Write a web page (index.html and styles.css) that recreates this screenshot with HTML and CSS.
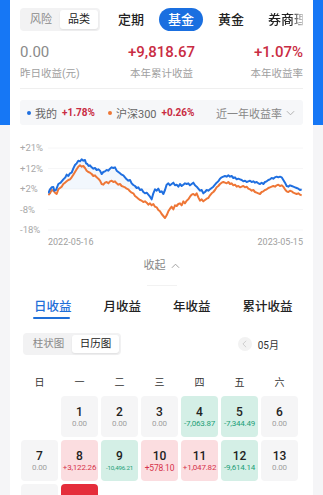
FILE: index.html
```html
<!DOCTYPE html>
<html lang="zh">
<head>
<meta charset="utf-8">
<link rel="stylesheet" href="styles.css">
</head>
<body>
<div class="page">
  <div class="card">
    <div class="toprow">
      <div class="seg"><span class="seg-item">风险</span><span class="seg-item on">品类</span></div>
      <div class="tabs">
        <span class="tab">定期</span>
        <span class="tab active">基金</span>
        <span class="tab">黄金</span>
        <span class="tab fade">券商理财</span>
      </div>
    </div>

    <div class="stats">
      <div class="stat left"><div class="num zero">0.00</div><div class="lbl">昨日收益(元)</div></div>
      <div class="stat center"><div class="num red">+9,818.67</div><div class="lbl">本年累计收益</div></div>
      <div class="stat right"><div class="num red">+1.07%</div><div class="lbl">本年收益率</div></div>
    </div>
    <div class="divider"></div>

    <div class="legend">
      <span class="dot blue"></span><span class="lg-name">我的</span><span class="lg-val">+1.78%</span>
      <span class="dot orange"></span><span class="lg-name">沪深300</span><span class="lg-val">+0.26%</span>
      <span class="lg-range">近一年收益率
        <svg class="chev" viewBox="0 0 10 6" width="9" height="6"><path d="M1 1 L5 5 L9 1" fill="none" stroke="#aaa" stroke-width="1"/></svg>
      </span>
    </div>

    <div class="chart">
      <div class="ylabels">
        <span>+21%</span><span>+12%</span><span>+2%</span><span>-8%</span><span>-18%</span>
      </div>
      <svg class="plot" viewBox="144 6 765 282" preserveAspectRatio="none" width="255" height="94">
        <g stroke="#f1f1f3" stroke-width="2">
          <line x1="144" x2="909" y1="24" y2="24"/>
          <line x1="144" x2="909" y1="85.5" y2="85.5"/>
          <line x1="144" x2="909" y1="147" y2="147"/>
          <line x1="144" x2="909" y1="208.5" y2="208.5"/>
          <line x1="144" x2="909" y1="270" y2="270"/>
        </g>
        <polygon fill="#2072e0" fill-opacity="0.06" points="145,147 145,160 150,148 155,142 160,141 163,152 168,150 175,132 182,128 190,118 196,112 200,104 205,108 210,100 215,98 220,85 225,75 230,70 235,62 240,64 245,58 250,62 255,60 258,70 262,72 266,78 270,76 275,82 280,86 285,84 290,90 295,88 300,92 305,102 310,96 315,94 320,90 325,92 330,86 335,82 340,84 345,82 350,92 355,96 360,100 365,104 370,106 375,112 380,118 385,122 390,120 395,130 400,135 405,138 410,144 415,142 420,147"/>
        <polyline fill="none" stroke="#ee7636" stroke-width="6" stroke-linejoin="round" points="145,165 150,160 155,150 160,152 165,158 170,162 175,148 180,144 185,140 190,132 195,128 200,124 205,120 210,118 215,112 220,104 225,96 230,88 235,80 240,76 245,80 250,78 255,84 260,92 265,96 270,98 275,102 280,108 285,106 290,112 295,116 300,122 305,132 310,134 315,128 320,126 325,130 330,124 335,122 340,126 345,124 350,130 355,134 360,132 365,138 370,140 375,142 380,146 385,148 390,154 395,158 400,160 405,168 410,172 415,176 420,180 425,182 430,186 435,184 440,188 445,194 450,190 455,196 460,192 465,200 470,202 475,210 480,214 485,222 490,228 495,234 500,226 505,214 510,206 515,200 520,208 525,196 530,198 535,192 540,190 545,196 550,184 555,190 560,182 565,178 570,170 575,164 580,162 585,166 590,160 595,172 600,182 605,178 610,184 615,180 620,176 625,174 630,166 635,160 640,156 645,150 650,142 655,138 660,132 665,128 670,126 675,128 680,130 685,126 690,132 695,130 700,136 705,134 710,140 715,138 720,142 725,140 730,138 735,142 740,140 745,146 750,148 755,152 760,150 765,156 770,158 775,160 780,162 785,156 790,154 795,150 800,148 805,144 810,142 815,140 820,138 825,140 830,136 835,134 840,138 845,136 850,140 855,148 860,154 865,156 870,152 875,154 880,158 885,160 890,162 895,160 900,164 905,166"/>
        <polyline fill="none" stroke="#1f6fe0" stroke-width="6" stroke-linejoin="round" points="145,160 150,148 155,142 160,141 163,152 168,150 175,132 182,128 190,118 196,112 200,104 205,108 210,100 215,98 220,85 225,75 230,70 235,62 240,64 245,58 250,62 255,60 258,70 262,72 266,78 270,76 275,82 280,86 285,84 290,90 295,88 300,92 305,102 310,96 315,94 320,90 325,92 330,86 335,82 340,84 345,82 350,92 355,96 360,100 365,104 370,106 375,112 380,118 385,122 390,120 395,130 400,135 405,138 410,144 415,142 420,150 425,148 430,156 435,160 440,158 445,164 450,170 455,178 460,160 465,148 470,152 475,146 480,156 485,154 490,162 495,150 500,134 505,130 510,136 515,132 520,128 525,136 530,134 535,140 540,132 545,138 550,134 555,130 560,132 565,130 570,136 575,132 580,128 585,136 590,140 595,146 600,152 605,150 610,160 615,156 620,150 625,152 630,148 635,144 640,140 645,134 650,128 655,124 660,116 665,112 670,110 675,108 680,110 685,106 690,110 695,108 700,114 705,112 710,118 715,116 720,118 725,120 730,124 735,122 740,126 745,124 750,122 755,126 760,124 765,128 770,126 775,130 780,132 785,128 790,132 795,126 800,124 805,120 810,118 815,114 820,116 825,112 830,110 835,112 840,110 845,112 850,120 855,128 860,138 865,140 870,136 875,138 880,140 885,142 890,144 895,146 900,150 905,148"/>
      </svg>
    </div>
    <div class="dates"><span>2022-05-16</span><span>2023-05-15</span></div>

    <div class="collapse">收起
      <svg viewBox="0 0 10 6" width="9" height="6"><path d="M1 5 L5 1 L9 5" fill="none" stroke="#999" stroke-width="1"/></svg>
    </div>
    <div class="handle"></div>

    <div class="ptabs">
      <span class="ptab active">日收益</span>
      <span class="ptab">月收益</span>
      <span class="ptab">年收益</span>
      <span class="ptab">累计收益</span>
    </div>

    <div class="viewrow">
      <div class="seg seg2"><span class="seg-item">柱状图</span><span class="seg-item on">日历图</span></div>
      <div class="month">
        <span class="prev"><svg viewBox="0 0 6 10" width="5" height="8"><path d="M5 1 L1 5 L5 9" fill="none" stroke="#c4c4c4" stroke-width="1"/></svg></span>
        <span class="mtext">05月</span>
      </div>
    </div>

    <div class="weekdays">
      <span>日</span><span>一</span><span>二</span><span>三</span><span>四</span><span>五</span><span>六</span>
    </div>

    <div class="cal">
      <div class="cell empty"></div>
      <div class="cell"><b>1</b><i>0.00</i></div>
      <div class="cell"><b>2</b><i>0.00</i></div>
      <div class="cell"><b>3</b><i>0.00</i></div>
      <div class="cell down"><b>4</b><i>-7,063.87</i></div>
      <div class="cell down"><b>5</b><i>-7,344.49</i></div>
      <div class="cell"><b>6</b><i>0.00</i></div>

      <div class="cell"><b>7</b><i>0.00</i></div>
      <div class="cell up"><b>8</b><i>+3,122.26</i></div>
      <div class="cell down"><b>9</b><i class="tiny">-10,496.21</i></div>
      <div class="cell up"><b>10</b><i class="big">+578.10</i></div>
      <div class="cell up"><b>11</b><i>+1,047.82</i></div>
      <div class="cell down"><b>12</b><i>-9,614.14</i></div>
      <div class="cell"><b>13</b><i>0.00</i></div>

      <div class="cell"></div>
      <div class="cell today"></div>
    </div>
  </div>
</div>
</body>
</html>
```

FILE: styles.css
```css
html, body {
  margin: 0;
  padding: 0;
}
body {
  background: linear-gradient(to bottom, #1677f5 0, #1677f5 125px, #f5f5f7 125px);
  font-family: Roboto, "Noto Sans CJK SC", sans-serif;
  color: #222;
  overflow: hidden;
}
.page {
  padding: 0 10px;
}
.card {
  background: #fff;
  padding: 8px 10px 0;
  min-height: 487px;
}

/* top row */
.toprow {
  display: flex;
  align-items: center;
  height: 23px;
  overflow: hidden;
}
.seg {
  display: flex;
  flex: none;
  background: #f2f2f3;
  border-radius: 4px;
  padding: 2px;
}
.seg-item {
  width: 38px;
  height: 19px;
  line-height: 19px;
  text-align: center;
  font-size: 11px;
  color: #8a8a8a;
  border-radius: 3px;
}
.seg-item.on {
  background: #fff;
  color: #222;
  box-shadow: 0 1px 2px rgba(0, 0, 0, 0.08);
}
.tabs {
  display: flex;
  flex: none;
  gap: 6px;
  margin-left: 9px;
}
.tab {
  padding: 0 9px;
  height: 23px;
  line-height: 23px;
  font-size: 13px;
  font-weight: 500;
  color: #222;
  border-radius: 12px;
  white-space: nowrap;
}
.tab.active {
  background: #1a6fe0;
  color: #fff;
}
.tab.fade {
  -webkit-mask-image: linear-gradient(to right, #000 45%, rgba(0, 0, 0, 0.25) 62%);
  mask-image: linear-gradient(to right, #000 45%, rgba(0, 0, 0, 0.25) 62%);
}

/* stats */
.stats {
  display: grid;
  grid-template-columns: 1fr 1fr 1fr;
  margin-top: 11px;
}
.stat.center { text-align: center; }
.stat.right { text-align: right; }
.num {
  font-size: 15px;
  line-height: 20px;
  font-weight: 500;
}
.num.zero {
  color: #8a8a8a;
  font-weight: 400;
}
.red { color: #c92c43; }
.lbl {
  margin-top: 4px;
  font-size: 10.5px;
  line-height: 16px;
  color: #a0a0a0;
}
.divider {
  margin-top: 6px;
  height: 1px;
  background: #efefef;
}

/* legend */
.legend {
  margin-top: 11px;
  height: 25px;
  background: #f6f7f9;
  border-radius: 3px;
  display: flex;
  align-items: center;
  padding: 0 8px 0 7px;
  font-size: 11px;
}
.dot {
  width: 4px;
  height: 4px;
  border-radius: 50%;
  margin-right: 4px;
}
.dot.blue { background: #1f6fe0; }
.dot.orange { background: #ee7636; margin-left: 13px; }
.lg-name {
  color: #666;
  margin-right: 5px;
}
.lg-val {
  color: #c92c43;
  font-weight: 700;
  font-size: 10px;
}
.lg-range {
  margin-left: auto;
  color: #888;
  display: flex;
  align-items: center;
  gap: 4px;
}
.chev { display: block; }

/* chart */
.chart {
  margin-top: 17px;
  display: flex;
}
.ylabels {
  width: 28px;
  display: flex;
  flex-direction: column;
  gap: 8.5px;
  font-size: 9.5px;
  line-height: 12px;
  color: #a8a8a8;
}
.plot {
  display: block;
  width: 255px;
  height: 94px;
}
.dates {
  display: flex;
  justify-content: space-between;
  padding-left: 28px;
  font-size: 9px;
  line-height: 12px;
  color: #a0a0a0;
}
.collapse {
  margin-top: 10px;
  height: 16px;
  line-height: 16px;
  font-size: 11px;
  color: #888;
  display: flex;
  justify-content: center;
  align-items: center;
  gap: 5px;
}
.handle {
  margin: 11px auto 0;
  width: 30px;
  height: 1px;
  background: #f2f2f2;
}

/* profit tabs */
.ptabs {
  margin-top: 11px;
  display: flex;
  gap: 32px;
  padding-left: 14px;
}
.ptab {
  position: relative;
  font-size: 12.5px;
  font-weight: 500;
  line-height: 20px;
  height: 22px;
  color: #222;
}
.ptab.active {
  color: #1f6fd8;
}
.ptab.active::after {
  content: "";
  position: absolute;
  left: -1px;
  bottom: 0;
  width: 37px;
  height: 2px;
  border-radius: 1px;
  background: #1f6fd8;
}

.viewrow {
  margin-top: 14px;
  display: flex;
  align-items: center;
  justify-content: space-between;
  padding-left: 3px;
}
.seg2 .seg-item {
  width: 47px;
  height: 18px;
  line-height: 18px;
  font-size: 10.5px;
}
.month {
  display: flex;
  align-items: center;
  gap: 6px;
  margin-right: 24px;
}
.prev {
  width: 14px;
  height: 14px;
  border-radius: 50%;
  background: #f2f2f2;
  display: flex;
  align-items: center;
  justify-content: center;
}
.prev svg { display: block; }
.mtext {
  font-size: 10px;
  color: #333;
}

/* calendar */
.weekdays, .cal {
  display: grid;
  grid-template-columns: repeat(7, 37px);
  column-gap: 3px;
  padding-left: 1px;
}
.weekdays {
  margin-top: 21px;
  font-size: 10px;
  line-height: 14px;
  color: #333;
  text-align: center;
}
.cal {
  margin-top: 6px;
  row-gap: 3px;
}
.cell {
  height: 41px;
  border-radius: 4px;
  background: #f5f5f6;
  box-sizing: border-box;
  padding-top: 9px;
  text-align: center;
  display: flex;
  flex-direction: column;
  align-items: center;
}
.cell.empty { background: transparent; }
.cell b {
  font-size: 12px;
  line-height: 14px;
  font-weight: 500;
  color: #222;
}
.cell i {
  font-style: normal;
  font-size: 8px;
  line-height: 10px;
  color: #a0a0a0;
  white-space: nowrap;
  letter-spacing: -0.2px;
}
.cell i.tiny { font-size: 6.2px; }
.cell i.big { font-size: 8.5px; }
.cell.down { background: #d4efe6; }
.cell.down i { color: #22a077; }
.cell.up { background: #fbdde0; }
.cell.up i { color: #d6334b; }
.cell.today { background: #e52d3b; }
```
